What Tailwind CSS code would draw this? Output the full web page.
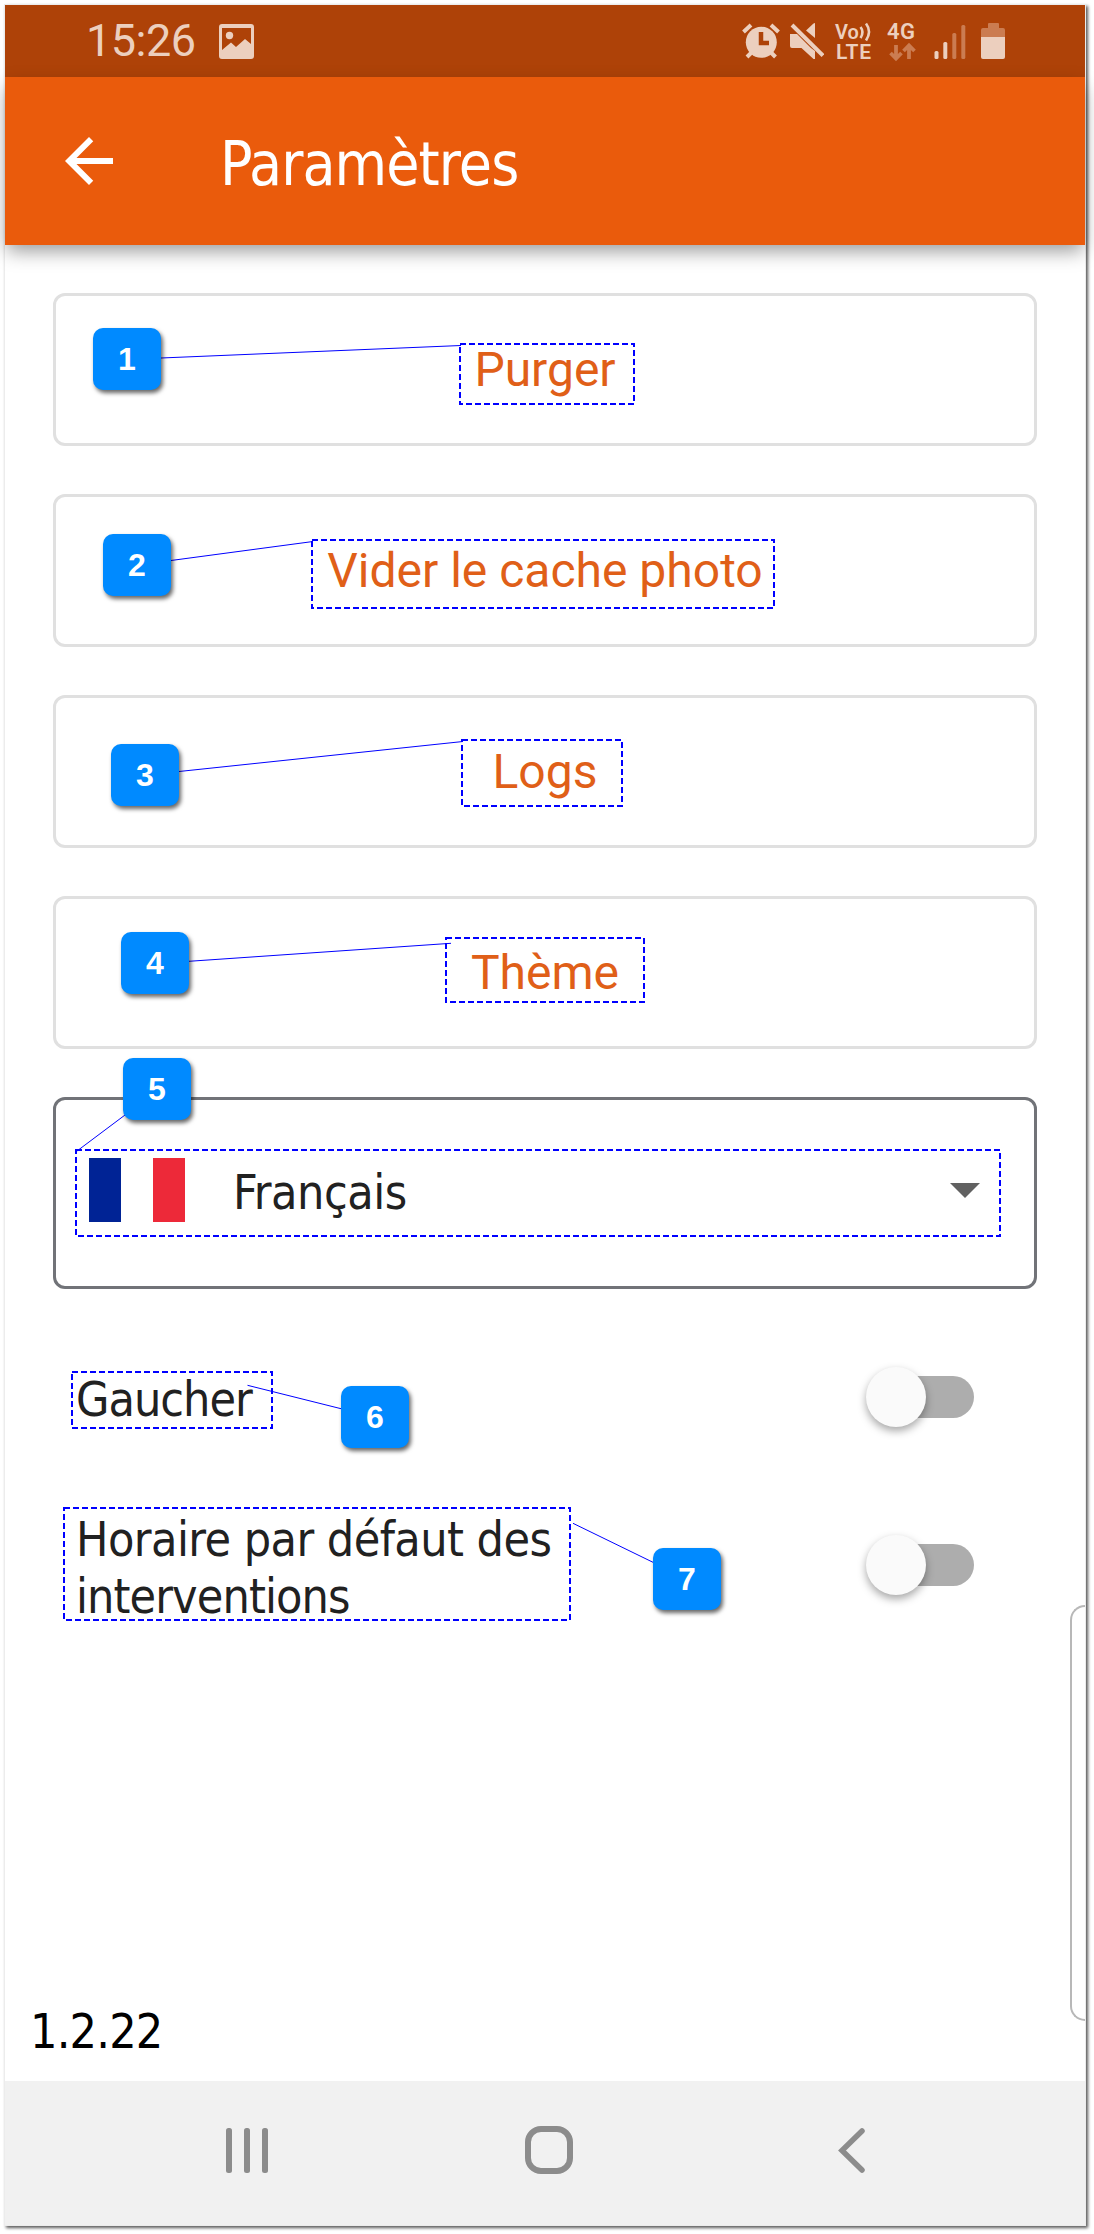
<!DOCTYPE html>
<html lang="fr">
<head>
  <meta charset="UTF-8" />
  <meta name="viewport" content="width=device-width, initial-scale=1.0"/>
  <title>Paramètres</title>
  <script src="https://cdn.jsdelivr.net/npm/@tailwindcss/browser@4"></script>
</head>
<body class="bg-white relative w-[1094px] h-[2234px] p-[5px] overflow-hidden font-['DejaVu_Sans_Condensed','DejaVu_Sans',sans-serif]">

  <div class="w-[1080px] h-[2220px] flex flex-col bg-white shadow-[0_0_0_1px_#ececec,2px_2px_3px_1px_rgba(0,0,0,0.65)] relative">

    <!-- status bar -->
    <div class="h-[72px] shrink-0 bg-[#ae4208] flex items-center pl-[81px] pr-20 font-[Roboto,sans-serif] text-[#eccfbe]">
      <span class="text-[45px] leading-[72px] w-[133px] tracking-[-0.5px]">15:26</span>
      <svg class="w-[35px] h-[35px]" viewBox="0 0 35 35">
        <path fill="#eccfbe" fill-rule="evenodd" d="M3 0h29a3 3 0 0 1 3 3v29a3 3 0 0 1-3 3H3a3 3 0 0 1-3-3V3a3 3 0 0 1 3-3zM3 4v22l9-7.500 5 4.500 9-8 6 5V4z"/>
        <circle cx="10.500" cy="11.500" r="3.700" fill="#eccfbe"/>
      </svg>

      <div class="ml-auto flex items-center">
        <!-- alarm -->
        <svg class="w-[38px] h-[36px]" viewBox="0 0 38 36">
          <circle cx="19.300" cy="19.300" r="15.500" fill="#eccfbe"/>
          <path d="M1.500 9L9 2M29 2l7.500 7M10 29l-5 5M28.500 29l5 5" stroke="#eccfbe" stroke-width="4" fill="none"/>
          <path d="M19 9v11h8" stroke="#ae4208" stroke-width="4.500" fill="none"/>
        </svg>
        <!-- mute -->
        <svg class="w-[34px] h-[36px] ml-[10px]" viewBox="0 0 34 36">
          <path d="M25 0v15L16 7.500 23.500 .5z" fill="#eccfbe"/>
          <path d="M0 11h7l14 14 4 3v8h-1.500L11.500 25H2a2 2 0 0 1-2-2z" fill="#eccfbe"/>
          <path d="M2 2l31 30.500" stroke="#eccfbe" stroke-width="4"/>
        </svg>
        <!-- VoLTE -->
        <svg class="w-[37px] h-[38px] ml-[11px] overflow-visible" viewBox="0 0 37 38">
          <g fill="#eccfbe" font-family="Roboto" font-weight="600">
            <text x="0" y="16.500" font-size="20">Vo</text>
            <text x="1" y="37" font-size="21" textLength="35">LTE</text>
          </g>
          <path d="M25.500 5q4 5 0 11M31 1.500q6 8 0 17" stroke="#eccfbe" stroke-width="2.600" fill="none"/>
        </svg>
        <!-- 4G -->
        <svg class="w-[29px] h-[38px] ml-[15px] overflow-visible" viewBox="0 0 29 38">
          <text x="0" y="17" font-size="22" font-family="Roboto" font-weight="600" fill="#eccfbe" textLength="28">4G</text>
          <path d="M9 23v13M3.500 31L9 36.500 14.500 31M22 37V24M16.500 29L22 23.500 27.500 29" stroke="#cb7c51" stroke-width="3.800" fill="none"/>
        </svg>
        <!-- signal -->
        <svg class="w-[32px] h-[36px] ml-[18px]" viewBox="0 0 32 36">
          <rect x="0.500" y="28" width="4" height="8" rx="1.500" fill="#eccfbe"/>
          <rect x="9.300" y="19" width="4" height="17" rx="1.500" fill="#eccfbe"/>
          <rect x="18.300" y="10" width="4" height="26" rx="1.500" fill="#cb7c51"/>
          <rect x="27.300" y="2" width="4" height="34" rx="1.500" fill="#cb7c51"/>
        </svg>
        <!-- battery -->
        <svg class="w-[24px] h-[36px] ml-[15px]" viewBox="0 0 24 36">
          <path d="M7 1a1 1 0 0 1 1-1h9a1 1 0 0 1 1 1v4h4a2 2 0 0 1 2 2v7H0V7a2 2 0 0 1 2-2h5z" fill="#cb7c51"/>
          <path d="M0 14h24v20a2 2 0 0 1-2 2H2a2 2 0 0 1-2-2z" fill="#eccfbe"/>
        </svg>
      </div>
    </div>

    <!-- app bar -->
    <header class="h-[168px] shrink-0 bg-[#ea5b0c] flex items-center pl-12 text-white shadow-[0_8px_18px_-2px_rgba(0,0,0,0.4)]">
      <svg class="w-[72px] h-[72px]" viewBox="0 0 24 24" fill="#fff"><path d="M20 11H7.830l5.590-5.590L12 4l-8 8 8 8 1.410-1.410L7.830 13H20v-2z"/></svg>
      <h1 class="ml-[95px] text-[60px] leading-[72px] mt-[6px] whitespace-nowrap tracking-[-0.9px]">Paramètres</h1>
    </header>

    <main class="flex-1 pt-12 px-12 flex flex-col text-[48px] text-[#212121]">
      <div class="flex flex-col gap-12 font-[Roboto,sans-serif] text-[#e05f18]">
        <button class="h-[153px] border-3 border-[#e0e0e0] rounded-xl">Purger</button>
        <button class="h-[153px] border-3 border-[#e0e0e0] rounded-xl">Vider le cache photo</button>
        <button class="h-[153px] border-3 border-[#e0e0e0] rounded-xl">Logs</button>
        <button class="h-[153px] border-3 border-[#e0e0e0] rounded-xl">Thème</button>
      </div>

      <!-- language -->
      <div class="mt-12 h-[192px] border-3 border-[#717378] rounded-xl flex items-center pl-[33px] pr-[54px] pb-[6px]">
        <div class="flex w-24 h-16">
          <div class="w-8 bg-[#002395]"></div>
          <div class="w-8 bg-white"></div>
          <div class="w-8 bg-[#ed2939]"></div>
        </div>
        <span class="ml-12 pt-1 tracking-[-0.5px]">Français</span>
        <svg class="ml-auto w-[30px] h-[15px]" viewBox="0 0 10 5"><path d="M0 0l5 5 5-5z" fill="#616161"/></svg>
      </div>

      <!-- switches -->
      <div class="mt-[66px] h-[84px] pl-[23px] pr-[63px] flex items-center justify-between leading-[57px]">
        <span class="pt-[5px] tracking-[-1px]">Gaucher</span>
        <div class="w-[102px] h-[42px] rounded-full bg-[#adadad] flex items-center">
          <div class="w-[60px] h-[60px] -ml-[6px] shrink-0 rounded-full bg-[#fafafa] shadow-[0_4px_8px_rgba(0,0,0,0.35)]"></div>
        </div>
      </div>
      <div class="mt-[68px] h-[116px] pl-[23px] pr-[63px] flex items-center justify-between leading-[57px]">
        <div class="pt-[5px] w-[520px] whitespace-nowrap">
          <p class="tracking-[-0.55px]">Horaire par défaut des</p>
          <p class="tracking-[-0.9px]">interventions</p>
        </div>
        <div class="w-[102px] h-[42px] rounded-full bg-[#adadad] flex items-center">
          <div class="w-[60px] h-[60px] -ml-[6px] shrink-0 rounded-full bg-[#fafafa] shadow-[0_4px_8px_rgba(0,0,0,0.35)]"></div>
        </div>
      </div>

      <p class="mt-auto mb-[21px] -ml-[23px] leading-[57px] text-black tracking-[-0.8px]">1.2.22</p>
    </main>

    <!-- navigation bar -->
    <nav class="h-36 shrink-0 bg-[#f1f1f1] flex items-center pl-[221px] pb-[6px]">
      <svg class="w-[42px] h-[45px]" viewBox="0 0 42 45" fill="#8c8c8c">
        <rect width="6" height="45" rx="2.500"/><rect x="18" width="6" height="45" rx="2.500"/><rect x="36" width="6" height="45" rx="2.500"/>
      </svg>
      <svg class="w-[48px] h-[48px] ml-[257px]" viewBox="0 0 48 48"><rect x="3" y="3" width="42" height="42" rx="13" fill="none" stroke="#8c8c8c" stroke-width="6"/></svg>
      <svg class="w-[27px] h-[45px] ml-[265px]" viewBox="0 0 27 45"><path d="M24 3L4 22.500 24 42" fill="none" stroke="#8c8c8c" stroke-width="5.500" stroke-linecap="round"/></svg>
    </nav>

    <!-- edge panel handle -->
    <div class="absolute right-0 top-[1600px] w-[15px] h-[416px] border-2 border-r-0 border-[#b8b8b8] rounded-l-[18px]"></div>
  </div>

  <!-- callouts -->
  <svg class="absolute left-0 top-0 w-[1094px] h-[2234px]" viewBox="0 0 1094 2234" fill="none" stroke="#0000ff">
    <g stroke-width="2" stroke-dasharray="6 3">
      <rect x="460" y="344" width="174" height="60"/>
      <rect x="312" y="540" width="462" height="68"/>
      <rect x="462" y="740" width="160" height="66"/>
      <rect x="446" y="938" width="198" height="64"/>
      <rect x="76" y="1150" width="924" height="86"/>
      <rect x="72" y="1372" width="200" height="56"/>
      <rect x="64" y="1508" width="506" height="112"/>
    </g>
    <g stroke-width="1">
      <path d="M161 358L461 345.500"/>
      <path d="M171 560.500L313 541.500"/>
      <path d="M179 771.500L463 741.500"/>
      <path d="M189 961.300L451 943.300"/>
      <path d="M125 1115L77 1151"/>
      <path d="M341 1408.700L247.500 1385.300"/>
      <path d="M653 1562.300L573 1523.300"/>
    </g>
  </svg>
  <div class="font-['Liberation_Sans',sans-serif] text-[32px] leading-[62px] font-bold text-white text-center">
    <div class="absolute left-[93px] top-[328px] w-[68px] h-[62px] rounded-[10px] bg-[#008aff] shadow-[2px_3px_4px_rgba(0,0,0,0.6)]">1</div>
    <div class="absolute left-[103px] top-[534px] w-[68px] h-[62px] rounded-[10px] bg-[#008aff] shadow-[2px_3px_4px_rgba(0,0,0,0.6)]">2</div>
    <div class="absolute left-[111px] top-[744px] w-[68px] h-[62px] rounded-[10px] bg-[#008aff] shadow-[2px_3px_4px_rgba(0,0,0,0.6)]">3</div>
    <div class="absolute left-[121px] top-[932px] w-[68px] h-[62px] rounded-[10px] bg-[#008aff] shadow-[2px_3px_4px_rgba(0,0,0,0.6)]">4</div>
    <div class="absolute left-[123px] top-[1058px] w-[68px] h-[62px] rounded-[10px] bg-[#008aff] shadow-[2px_3px_4px_rgba(0,0,0,0.6)]">5</div>
    <div class="absolute left-[341px] top-[1386px] w-[68px] h-[62px] rounded-[10px] bg-[#008aff] shadow-[2px_3px_4px_rgba(0,0,0,0.6)]">6</div>
    <div class="absolute left-[653px] top-[1548px] w-[68px] h-[62px] rounded-[10px] bg-[#008aff] shadow-[2px_3px_4px_rgba(0,0,0,0.6)]">7</div>
  </div>

</body>
</html>
